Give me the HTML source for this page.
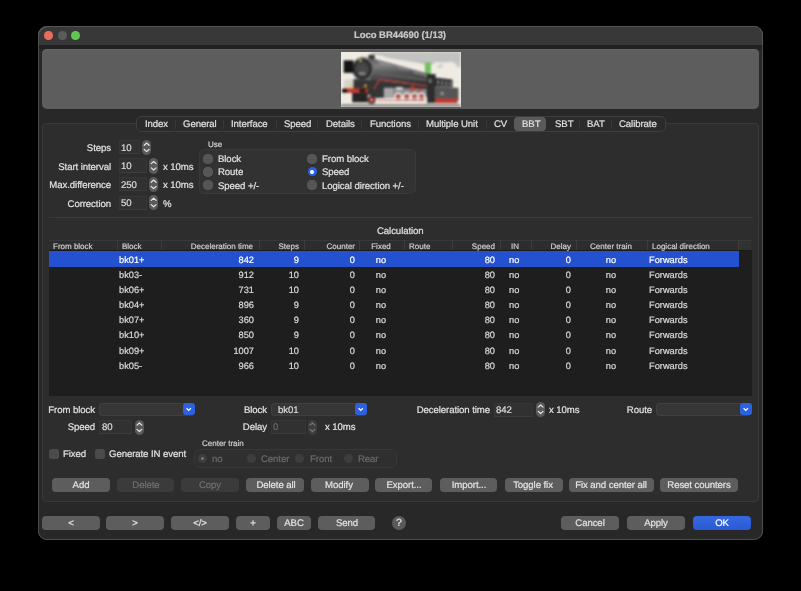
<!DOCTYPE html>
<html><head><meta charset="utf-8"><title>Loco BR44690</title>
<style>
*{box-sizing:border-box;margin:0;padding:0}
html,body{width:801px;height:591px;background:#000;overflow:hidden}
body{position:relative;font-family:"Liberation Sans",sans-serif;font-size:9.6px;color:#dcdcdc}
.a{position:absolute}
.t{position:absolute;line-height:1;white-space:nowrap;-webkit-text-stroke:0.2px currentColor;text-rendering:geometricPrecision}
body>div{will-change:transform}
</style></head><body>
<div class="a" style="left:38.00px;top:26.00px;width:725.00px;height:514.00px;border-radius:9px;background:#282828;box-shadow:0 0 0 1px #4d4d4d inset;"></div>
<div class="a" style="left:38.00px;top:26.00px;width:725.00px;height:19.00px;border-radius:9px 9px 0 0;background:#383838;box-shadow:inset 1px 1px 0 #555, inset -1px 0 0 #555;"></div>
<div class="a" style="left:39.00px;top:45.00px;width:723.00px;height:4.00px;background:#212121;"></div>
<div class="a" style="left:43.70px;top:31.40px;width:8.60px;height:8.60px;border-radius:50%;background:#ed6a5e;"></div>
<div class="a" style="left:57.50px;top:31.40px;width:8.60px;height:8.60px;border-radius:50%;background:#5b5b5b;"></div>
<div class="a" style="left:71.20px;top:31.40px;width:8.60px;height:8.60px;border-radius:50%;background:#62c554;"></div>
<div class="t " style="left:353.50px;top:31.00px;font-size:9.5px;letter-spacing:-0.05px;color:#c9c9c9;font-weight:700;">Loco BR44690 (1/13)</div>
<div class="a" style="left:42.00px;top:48.80px;width:717.00px;height:60.40px;background:#5d5d5d;border-radius:5px;box-shadow:inset 0 1px 0 #666;"></div>
<div class="a" style="left:341px;top:51.5px;width:119.5px;height:55px;overflow:hidden;background:#efebe3"><div style="filter:blur(0.8px)"><svg width="119.5" height="55" viewBox="0 0 120 55" style="display:block">
<defs><filter id="bl" x="-5%" y="-5%" width="110%" height="110%"><feGaussianBlur stdDeviation="0.7"/></filter>
<linearGradient id="boil" x1="0" y1="0" x2="0.15" y2="1"><stop offset="0" stop-color="#5a5a5a"/><stop offset="0.3" stop-color="#808080"/><stop offset="0.6" stop-color="#555"/><stop offset="1" stop-color="#333"/></linearGradient>
</defs>
<rect width="120" height="55" fill="#efebe3"/>
<g>
<path d="M30 0 L120 0 L120 15.5 L117 14.5 L114 11 L111 10 L100 10.5 L95 10 L91 13 L84 12.5 L78 11 L72 10 L60 8 L48 6 L38 3 L30 2 Z" fill="#c2c2c0"/>
<path d="M96.5 13.5 L102 12.5 L103 14.5 L98 16.5 Z" fill="#cdcdcb"/>
<path d="M115 12 L118 11 L118 15 L116 15.5 Z" fill="#d0d0ce"/>
<rect x="87.5" y="0" width="4" height="2" fill="#b6d3a8"/>
<rect x="84.3" y="10.5" width="6" height="13" fill="#72bf5e"/>
<rect x="84.3" y="52" width="6" height="3" fill="#86c274"/>
<path d="M3 28 L12 27 L12 40 L3 40 Z" fill="#d6d4ce"/>
<path d="M27.6 2.8 L33.9 2.8 L33.9 7.5 L27.6 7.5 Z" fill="#333"/>
<path d="M22 6 L33 6.7 L48.7 10.6 L70.5 16.9 L89.3 22.3 L90 34 L60 31 L33 28.5 L22 26 Z" fill="url(#boil)"/>
<path d="M36 8.5 L48 11 L52 14 L40 13 Z" fill="#8c8c8c"/>
<path d="M54 12.5 L66 15.5 L70 19 L58 17 Z" fill="#858585"/>
<path d="M70 17.5 L86 22 L87 25 L74 22 Z" fill="#777"/>
<path d="M36 20 L86 27 L86 29 L36 23 Z" fill="#5c5c5c"/>
<ellipse cx="22" cy="16.8" rx="11" ry="12" fill="#6a6a6a"/>
<ellipse cx="21.6" cy="17" rx="9.3" ry="10.2" fill="#222"/>
<ellipse cx="21.4" cy="17.2" rx="7.4" ry="8.2" fill="#444"/>
<ellipse cx="21.6" cy="18.3" rx="3.6" ry="4" fill="#4a4a4a"/>
<rect x="18" y="20.5" width="6.5" height="2" fill="#999"/>
<circle cx="19.5" cy="8.5" r="1.3" fill="#e2c640"/>
<rect x="2.7" y="8.3" width="9.8" height="12.5" fill="#131313"/>
<path d="M12.5 27 L33 28 L60 31 L89 34 L89 45 L60 46 L35 46 L26 42 L12.5 38 Z" fill="#353535"/>
<rect x="43" y="35.8" width="9.8" height="9.9" fill="#a8a8a8"/>
<path d="M52 36 L86 37 L86 45 L52 45 Z" fill="#8a8a8a"/>
<path d="M55 35 L62 35 L62 38 L55 38 Z" fill="#d0d0d0"/>
<path d="M33 37.3 L38.6 27.6 L59 30.2 L89 34.3" stroke="#cc4036" stroke-width="1.15" fill="none"/>
<rect x="70" y="34.5" width="4" height="4" fill="#c53a2e"/>
<rect x="78" y="36" width="2.5" height="3.5" fill="#c53a2e"/>
<rect x="1.9" y="36.4" width="24.9" height="4.6" fill="#c3392d"/>
<rect x="1" y="37" width="5" height="3.5" fill="#161616"/>
<rect x="18.5" y="37" width="6" height="3.5" fill="#1c1c1c"/>
<rect x="11.2" y="41" width="15.6" height="9.4" fill="#242424"/>
<circle cx="10.4" cy="33.9" r="1.3" fill="#e2c640"/>
<circle cx="24.6" cy="33.9" r="1.3" fill="#e2c640"/>
<circle cx="30.7" cy="48" r="3.9" fill="#2a2a2a"/>
<circle cx="30.7" cy="48" r="2.6" fill="#c3392d"/>
<circle cx="30.7" cy="48" r="0.9" fill="#eee"/>
<g fill="#e4e4e4"><circle cx="57.5" cy="45" r="4.6"/><circle cx="66" cy="45" r="4.6"/><circle cx="73.8" cy="45" r="4.6"/><circle cx="80.8" cy="45" r="4.6"/></g>
<g fill="#c53a2e"><circle cx="57.5" cy="45" r="2.6"/><circle cx="66" cy="45" r="2.6"/><circle cx="73.8" cy="45" r="2.6"/><circle cx="80.8" cy="45" r="2.6"/></g>
<g fill="#3a3a3a"><circle cx="57.5" cy="45" r="1.1"/><circle cx="66" cy="45" r="1.1"/><circle cx="73.8" cy="45" r="1.1"/><circle cx="80.8" cy="45" r="1.1"/></g>
<path d="M38 46.5 L84 45.5" stroke="#ececec" stroke-width="1"/>
<path d="M36 48.5 L84 48.5" stroke="#c94036" stroke-width="0.7"/>
<rect x="86.5" y="22" width="8.5" height="29" fill="#2c2c2c"/>
<rect x="88" y="27" width="3" height="4" fill="#777"/>
<path d="M94 25.4 L112 27.5 L112 35 L94 34 Z" fill="#2e2e2e"/>
<g fill="#a0a0a0"><rect x="97" y="28" width="1.3" height="4.5"/><rect x="101" y="28.5" width="1.3" height="4.5"/><rect x="105" y="29" width="1.3" height="4.5"/><rect x="109" y="29.3" width="1.3" height="4.5"/></g>
<path d="M94 34 L118 36 L118 48.8 L94 47.8 Z" fill="#555"/>
<rect x="100" y="40" width="3" height="3" fill="#9a9a9a"/>
<rect x="94.5" y="46.6" width="22.5" height="4.6" fill="#c3392d"/>
<rect x="0" y="52.3" width="120" height="2.7" fill="#8c8c8c"/>
</g>
</svg>
</div></div>
<div class="a" style="left:42.00px;top:123.00px;width:717.00px;height:379.30px;background:#2d2d2d;border:1px solid #3a3a3a;border-radius:4px;"></div>
<div class="a" style="left:135.50px;top:115.50px;width:530.00px;height:15.50px;background:#2b2b2b;border:1px solid #3e3e3e;border-radius:5px;"></div>
<div class="a" style="left:514.00px;top:116.50px;width:31.70px;height:13.50px;background:#5a5a5a;border-radius:4px;"></div>
<div class="t " style="left:145.00px;top:120.00px;font-size:9.6px;letter-spacing:-0.08px;color:#e0e0e0;">Index</div>
<div class="t " style="left:183.00px;top:120.00px;font-size:9.6px;letter-spacing:-0.08px;color:#e0e0e0;">General</div>
<div class="t " style="left:230.75px;top:120.00px;font-size:9.6px;letter-spacing:-0.08px;color:#e0e0e0;">Interface</div>
<div class="t " style="left:283.75px;top:120.00px;font-size:9.6px;letter-spacing:-0.08px;color:#e0e0e0;">Speed</div>
<div class="t " style="left:325.70px;top:120.00px;font-size:9.6px;letter-spacing:-0.08px;color:#e0e0e0;">Details</div>
<div class="t " style="left:369.50px;top:120.00px;font-size:9.6px;letter-spacing:-0.08px;color:#e0e0e0;">Functions</div>
<div class="t " style="left:426.20px;top:120.00px;font-size:9.6px;letter-spacing:-0.08px;color:#e0e0e0;">Multiple Unit</div>
<div class="t " style="left:494.00px;top:120.00px;font-size:9.6px;letter-spacing:-0.08px;color:#e0e0e0;">CV</div>
<div class="t " style="left:521.50px;top:120.00px;font-size:9.6px;letter-spacing:-0.08px;color:#e0e0e0;">BBT</div>
<div class="t " style="left:554.70px;top:120.00px;font-size:9.6px;letter-spacing:-0.08px;color:#e0e0e0;">SBT</div>
<div class="t " style="left:586.60px;top:120.00px;font-size:9.6px;letter-spacing:-0.08px;color:#e0e0e0;">BAT</div>
<div class="t " style="left:619.20px;top:120.00px;font-size:9.6px;letter-spacing:-0.08px;color:#e0e0e0;">Calibrate</div>
<div class="a" style="left:175.00px;top:119.50px;width:1.00px;height:9.00px;background:#383838;"></div>
<div class="a" style="left:223.00px;top:119.50px;width:1.00px;height:9.00px;background:#383838;"></div>
<div class="a" style="left:276.00px;top:119.50px;width:1.00px;height:9.00px;background:#383838;"></div>
<div class="a" style="left:317.00px;top:119.50px;width:1.00px;height:9.00px;background:#383838;"></div>
<div class="a" style="left:361.20px;top:119.50px;width:1.00px;height:9.00px;background:#383838;"></div>
<div class="a" style="left:417.50px;top:119.50px;width:1.00px;height:9.00px;background:#383838;"></div>
<div class="a" style="left:486.20px;top:119.50px;width:1.00px;height:9.00px;background:#383838;"></div>
<div class="a" style="left:578.80px;top:119.50px;width:1.00px;height:9.00px;background:#383838;"></div>
<div class="a" style="left:611.30px;top:119.50px;width:1.00px;height:9.00px;background:#383838;"></div>
<div class="t" style="left:-89.00px;width:200px;text-align:right;top:144.00px;font-size:9.6px;letter-spacing:-0.08px;color:#e2e2e2;">Steps</div>
<div class="a" style="left:118.70px;top:140.00px;width:21.30px;height:13.70px;background:#313131;border:1px solid #363636;border-bottom-color:#3c3c3c;"></div>
<div class="t " style="left:121.00px;top:144.00px;font-size:9.6px;letter-spacing:-0.08px;color:#dcdcdc;">10</div>
<div class="a" style="left:142.20px;top:139.50px;width:9.30px;height:14.70px;background:#5a5a5a;border-radius:4.5px;"><svg width="9.30" height="14.70" viewBox="0 0 9.30 14.70" style="position:absolute;left:0;top:0"><path d="M2.25 5.25 L4.65 3.05 L7.05 5.25 M2.25 9.45 L4.65 11.65 L7.05 9.45" stroke="#e6e6e6" stroke-width="1.2" fill="none" stroke-linecap="round" stroke-linejoin="round"/></svg></div>
<div class="t" style="left:-89.00px;width:200px;text-align:right;top:163.00px;font-size:9.6px;letter-spacing:-0.08px;color:#e2e2e2;">Start interval</div>
<div class="a" style="left:118.70px;top:158.00px;width:28.00px;height:14.50px;background:#313131;border:1px solid #363636;border-bottom-color:#3c3c3c;"></div>
<div class="t " style="left:121.00px;top:162.00px;font-size:9.6px;letter-spacing:-0.08px;color:#dcdcdc;">10</div>
<div class="a" style="left:148.90px;top:157.50px;width:9.30px;height:15.50px;background:#5a5a5a;border-radius:4.5px;"><svg width="9.30" height="15.50" viewBox="0 0 9.30 15.50" style="position:absolute;left:0;top:0"><path d="M2.25 5.65 L4.65 3.45 L7.05 5.65 M2.25 9.85 L4.65 12.05 L7.05 9.85" stroke="#e6e6e6" stroke-width="1.2" fill="none" stroke-linecap="round" stroke-linejoin="round"/></svg></div>
<div class="t " style="left:163.00px;top:163.00px;font-size:9.6px;letter-spacing:-0.08px;color:#e2e2e2;">x 10ms</div>
<div class="t" style="left:-89.00px;width:200px;text-align:right;top:181.00px;font-size:9.6px;letter-spacing:-0.08px;color:#e2e2e2;">Max.difference</div>
<div class="a" style="left:118.70px;top:177.00px;width:28.00px;height:13.70px;background:#313131;border:1px solid #363636;border-bottom-color:#3c3c3c;"></div>
<div class="t " style="left:121.00px;top:181.00px;font-size:9.6px;letter-spacing:-0.08px;color:#dcdcdc;">250</div>
<div class="a" style="left:148.90px;top:176.50px;width:9.30px;height:14.70px;background:#5a5a5a;border-radius:4.5px;"><svg width="9.30" height="14.70" viewBox="0 0 9.30 14.70" style="position:absolute;left:0;top:0"><path d="M2.25 5.25 L4.65 3.05 L7.05 5.25 M2.25 9.45 L4.65 11.65 L7.05 9.45" stroke="#e6e6e6" stroke-width="1.2" fill="none" stroke-linecap="round" stroke-linejoin="round"/></svg></div>
<div class="t " style="left:163.00px;top:181.00px;font-size:9.6px;letter-spacing:-0.08px;color:#e2e2e2;">x 10ms</div>
<div class="t" style="left:-89.00px;width:200px;text-align:right;top:200.00px;font-size:9.6px;letter-spacing:-0.08px;color:#e2e2e2;">Correction</div>
<div class="a" style="left:118.70px;top:195.50px;width:28.00px;height:14.00px;background:#313131;border:1px solid #363636;border-bottom-color:#3c3c3c;"></div>
<div class="t " style="left:121.00px;top:199.00px;font-size:9.6px;letter-spacing:-0.08px;color:#dcdcdc;">50</div>
<div class="a" style="left:148.90px;top:195.00px;width:9.30px;height:15.00px;background:#5a5a5a;border-radius:4.5px;"><svg width="9.30" height="15.00" viewBox="0 0 9.30 15.00" style="position:absolute;left:0;top:0"><path d="M2.25 5.40 L4.65 3.20 L7.05 5.40 M2.25 9.60 L4.65 11.80 L7.05 9.60" stroke="#e6e6e6" stroke-width="1.2" fill="none" stroke-linecap="round" stroke-linejoin="round"/></svg></div>
<div class="t " style="left:163.00px;top:200.00px;font-size:9.6px;letter-spacing:-0.08px;color:#e2e2e2;">%</div>
<div class="t " style="left:207.50px;top:141.00px;font-size:8px;color:#d4d4d4;">Use</div>
<div class="a" style="left:199.30px;top:149.20px;width:217.30px;height:45.30px;border:1px solid #393939;border-radius:5px;background:#323232;"></div>
<div class="a" style="left:203.20px;top:153.60px;width:9.8px;height:9.8px;border-radius:50%;background:#565656;box-shadow:inset 0 0 0 0.6px #5a5a5a;"></div>
<div class="t " style="left:217.50px;top:155.00px;font-size:9.6px;letter-spacing:-0.08px;color:#e2e2e2;">Block</div>
<div class="a" style="left:203.20px;top:166.60px;width:9.8px;height:9.8px;border-radius:50%;background:#565656;box-shadow:inset 0 0 0 0.6px #5a5a5a;"></div>
<div class="t " style="left:217.50px;top:168.00px;font-size:9.6px;letter-spacing:-0.08px;color:#e2e2e2;">Route</div>
<div class="a" style="left:203.20px;top:180.10px;width:9.8px;height:9.8px;border-radius:50%;background:#565656;box-shadow:inset 0 0 0 0.6px #5a5a5a;"></div>
<div class="t " style="left:217.50px;top:182.00px;font-size:9.6px;letter-spacing:-0.08px;color:#e2e2e2;">Speed +/-</div>
<div class="a" style="left:307.20px;top:153.60px;width:9.8px;height:9.8px;border-radius:50%;background:#565656;box-shadow:inset 0 0 0 0.6px #5a5a5a;"></div>
<div class="t " style="left:321.50px;top:155.00px;font-size:9.6px;letter-spacing:-0.08px;color:#e2e2e2;">From block</div>
<div class="a" style="left:307.50px;top:166.90px;width:9.2px;height:9.2px;border-radius:50%;background:#2b62e1;"></div>
<div class="a" style="left:310.20px;top:169.60px;width:3.8px;height:3.8px;border-radius:50%;background:#fff;"></div>
<div class="t " style="left:321.50px;top:168.00px;font-size:9.6px;letter-spacing:-0.08px;color:#e2e2e2;">Speed</div>
<div class="a" style="left:307.20px;top:180.10px;width:9.8px;height:9.8px;border-radius:50%;background:#565656;box-shadow:inset 0 0 0 0.6px #5a5a5a;"></div>
<div class="t " style="left:321.50px;top:182.00px;font-size:9.6px;letter-spacing:-0.08px;color:#e2e2e2;">Logical direction +/-</div>
<div class="a" style="left:49.00px;top:217.00px;width:703.50px;height:1.00px;background:#3a3a3a;"></div>
<div class="t " style="left:377.20px;top:227.00px;font-size:9.6px;letter-spacing:-0.08px;color:#e2e2e2;">Calculation</div>
<div class="a" style="left:48.80px;top:240.00px;width:702.60px;height:156.00px;background:#1e1e1e;"></div>
<div class="a" style="left:48.80px;top:240.00px;width:702.60px;height:11.00px;background:#2d2d2d;border-top:1px solid #383838;border-bottom:1px solid #1b1b1b;"></div>
<div class="a" style="left:738.00px;top:240.00px;width:13.40px;height:10.00px;background:#323232;border-top:1px solid #3a3a3a;"></div>
<div class="a" style="left:117.40px;top:240.00px;width:1.00px;height:10.00px;background:#3c3c3c;"></div>
<div class="a" style="left:161.40px;top:240.00px;width:1.00px;height:10.00px;background:#3c3c3c;"></div>
<div class="a" style="left:258.50px;top:240.00px;width:1.00px;height:10.00px;background:#3c3c3c;"></div>
<div class="a" style="left:304.00px;top:240.00px;width:1.00px;height:10.00px;background:#3c3c3c;"></div>
<div class="a" style="left:359.40px;top:240.00px;width:1.00px;height:10.00px;background:#3c3c3c;"></div>
<div class="a" style="left:404.00px;top:240.00px;width:1.00px;height:10.00px;background:#3c3c3c;"></div>
<div class="a" style="left:451.50px;top:240.00px;width:1.00px;height:10.00px;background:#3c3c3c;"></div>
<div class="a" style="left:500.30px;top:240.00px;width:1.00px;height:10.00px;background:#3c3c3c;"></div>
<div class="a" style="left:531.20px;top:240.00px;width:1.00px;height:10.00px;background:#3c3c3c;"></div>
<div class="a" style="left:576.20px;top:240.00px;width:1.00px;height:10.00px;background:#3c3c3c;"></div>
<div class="a" style="left:647.00px;top:240.00px;width:1.00px;height:10.00px;background:#3c3c3c;"></div>
<div class="a" style="left:738.00px;top:240.00px;width:1.00px;height:10.00px;background:#3c3c3c;"></div>
<div class="t " style="left:52.90px;top:243.00px;font-size:8px;color:#cfcfcf;">From block</div>
<div class="t " style="left:121.90px;top:243.00px;font-size:8px;color:#cfcfcf;">Block</div>
<div class="t" style="left:53.30px;width:200px;text-align:right;top:243.00px;font-size:8px;color:#cfcfcf;">Deceleration time</div>
<div class="t" style="left:99.20px;width:200px;text-align:right;top:243.00px;font-size:8px;color:#cfcfcf;">Steps</div>
<div class="t" style="left:154.90px;width:200px;text-align:right;top:243.00px;font-size:8px;color:#cfcfcf;">Counter</div>
<div class="t" style="left:280.50px;width:200px;text-align:center;top:243.00px;font-size:8px;color:#cfcfcf;">Fixed</div>
<div class="t " style="left:409.00px;top:243.00px;font-size:8px;color:#cfcfcf;">Route</div>
<div class="t" style="left:295.20px;width:200px;text-align:right;top:243.00px;font-size:8px;color:#cfcfcf;">Speed</div>
<div class="t" style="left:415.00px;width:200px;text-align:center;top:243.00px;font-size:8px;color:#cfcfcf;">IN</div>
<div class="t" style="left:371.20px;width:200px;text-align:right;top:243.00px;font-size:8px;color:#cfcfcf;">Delay</div>
<div class="t" style="left:511.20px;width:200px;text-align:center;top:243.00px;font-size:8px;color:#cfcfcf;">Center train</div>
<div class="t " style="left:651.90px;top:243.00px;font-size:8px;color:#cfcfcf;">Logical direction</div>
<div class="a" style="left:48.80px;top:251.00px;width:689.80px;height:15.80px;background:#2451cf;"></div>
<div class="t " style="left:118.90px;top:256.00px;font-size:9.25px;color:#ffffff;">bk01+</div>
<div class="t" style="left:53.60px;width:200px;text-align:right;top:256.00px;font-size:9.25px;color:#ffffff;">842</div>
<div class="t" style="left:99.20px;width:200px;text-align:right;top:256.00px;font-size:9.25px;color:#ffffff;">9</div>
<div class="t" style="left:155.00px;width:200px;text-align:right;top:256.00px;font-size:9.25px;color:#ffffff;">0</div>
<div class="t" style="left:280.50px;width:200px;text-align:center;top:256.00px;font-size:9.25px;color:#ffffff;">no</div>
<div class="t" style="left:295.30px;width:200px;text-align:right;top:256.00px;font-size:9.25px;color:#ffffff;">80</div>
<div class="t " style="left:508.50px;top:256.00px;font-size:9.25px;color:#ffffff;">no</div>
<div class="t" style="left:371.40px;width:200px;text-align:right;top:256.00px;font-size:9.25px;color:#ffffff;">0</div>
<div class="t" style="left:510.50px;width:200px;text-align:center;top:256.00px;font-size:9.25px;color:#ffffff;">no</div>
<div class="t " style="left:649.20px;top:256.00px;font-size:9.25px;color:#ffffff;">Forwards</div>
<div class="t " style="left:118.90px;top:271.00px;font-size:9.25px;color:#dcdcdc;">bk03-</div>
<div class="t" style="left:53.60px;width:200px;text-align:right;top:271.00px;font-size:9.25px;color:#dcdcdc;">912</div>
<div class="t" style="left:99.20px;width:200px;text-align:right;top:271.00px;font-size:9.25px;color:#dcdcdc;">10</div>
<div class="t" style="left:155.00px;width:200px;text-align:right;top:271.00px;font-size:9.25px;color:#dcdcdc;">0</div>
<div class="t" style="left:280.50px;width:200px;text-align:center;top:271.00px;font-size:9.25px;color:#dcdcdc;">no</div>
<div class="t" style="left:295.30px;width:200px;text-align:right;top:271.00px;font-size:9.25px;color:#dcdcdc;">80</div>
<div class="t " style="left:508.50px;top:271.00px;font-size:9.25px;color:#dcdcdc;">no</div>
<div class="t" style="left:371.40px;width:200px;text-align:right;top:271.00px;font-size:9.25px;color:#dcdcdc;">0</div>
<div class="t" style="left:510.50px;width:200px;text-align:center;top:271.00px;font-size:9.25px;color:#dcdcdc;">no</div>
<div class="t " style="left:649.20px;top:271.00px;font-size:9.25px;color:#dcdcdc;">Forwards</div>
<div class="t " style="left:118.90px;top:286.00px;font-size:9.25px;color:#dcdcdc;">bk06+</div>
<div class="t" style="left:53.60px;width:200px;text-align:right;top:286.00px;font-size:9.25px;color:#dcdcdc;">731</div>
<div class="t" style="left:99.20px;width:200px;text-align:right;top:286.00px;font-size:9.25px;color:#dcdcdc;">10</div>
<div class="t" style="left:155.00px;width:200px;text-align:right;top:286.00px;font-size:9.25px;color:#dcdcdc;">0</div>
<div class="t" style="left:280.50px;width:200px;text-align:center;top:286.00px;font-size:9.25px;color:#dcdcdc;">no</div>
<div class="t" style="left:295.30px;width:200px;text-align:right;top:286.00px;font-size:9.25px;color:#dcdcdc;">80</div>
<div class="t " style="left:508.50px;top:286.00px;font-size:9.25px;color:#dcdcdc;">no</div>
<div class="t" style="left:371.40px;width:200px;text-align:right;top:286.00px;font-size:9.25px;color:#dcdcdc;">0</div>
<div class="t" style="left:510.50px;width:200px;text-align:center;top:286.00px;font-size:9.25px;color:#dcdcdc;">no</div>
<div class="t " style="left:649.20px;top:286.00px;font-size:9.25px;color:#dcdcdc;">Forwards</div>
<div class="t " style="left:118.90px;top:301.00px;font-size:9.25px;color:#dcdcdc;">bk04+</div>
<div class="t" style="left:53.60px;width:200px;text-align:right;top:301.00px;font-size:9.25px;color:#dcdcdc;">896</div>
<div class="t" style="left:99.20px;width:200px;text-align:right;top:301.00px;font-size:9.25px;color:#dcdcdc;">9</div>
<div class="t" style="left:155.00px;width:200px;text-align:right;top:301.00px;font-size:9.25px;color:#dcdcdc;">0</div>
<div class="t" style="left:280.50px;width:200px;text-align:center;top:301.00px;font-size:9.25px;color:#dcdcdc;">no</div>
<div class="t" style="left:295.30px;width:200px;text-align:right;top:301.00px;font-size:9.25px;color:#dcdcdc;">80</div>
<div class="t " style="left:508.50px;top:301.00px;font-size:9.25px;color:#dcdcdc;">no</div>
<div class="t" style="left:371.40px;width:200px;text-align:right;top:301.00px;font-size:9.25px;color:#dcdcdc;">0</div>
<div class="t" style="left:510.50px;width:200px;text-align:center;top:301.00px;font-size:9.25px;color:#dcdcdc;">no</div>
<div class="t " style="left:649.20px;top:301.00px;font-size:9.25px;color:#dcdcdc;">Forwards</div>
<div class="t " style="left:118.90px;top:316.00px;font-size:9.25px;color:#dcdcdc;">bk07+</div>
<div class="t" style="left:53.60px;width:200px;text-align:right;top:316.00px;font-size:9.25px;color:#dcdcdc;">360</div>
<div class="t" style="left:99.20px;width:200px;text-align:right;top:316.00px;font-size:9.25px;color:#dcdcdc;">9</div>
<div class="t" style="left:155.00px;width:200px;text-align:right;top:316.00px;font-size:9.25px;color:#dcdcdc;">0</div>
<div class="t" style="left:280.50px;width:200px;text-align:center;top:316.00px;font-size:9.25px;color:#dcdcdc;">no</div>
<div class="t" style="left:295.30px;width:200px;text-align:right;top:316.00px;font-size:9.25px;color:#dcdcdc;">80</div>
<div class="t " style="left:508.50px;top:316.00px;font-size:9.25px;color:#dcdcdc;">no</div>
<div class="t" style="left:371.40px;width:200px;text-align:right;top:316.00px;font-size:9.25px;color:#dcdcdc;">0</div>
<div class="t" style="left:510.50px;width:200px;text-align:center;top:316.00px;font-size:9.25px;color:#dcdcdc;">no</div>
<div class="t " style="left:649.20px;top:316.00px;font-size:9.25px;color:#dcdcdc;">Forwards</div>
<div class="t " style="left:118.90px;top:331.00px;font-size:9.25px;color:#dcdcdc;">bk10+</div>
<div class="t" style="left:53.60px;width:200px;text-align:right;top:331.00px;font-size:9.25px;color:#dcdcdc;">850</div>
<div class="t" style="left:99.20px;width:200px;text-align:right;top:331.00px;font-size:9.25px;color:#dcdcdc;">9</div>
<div class="t" style="left:155.00px;width:200px;text-align:right;top:331.00px;font-size:9.25px;color:#dcdcdc;">0</div>
<div class="t" style="left:280.50px;width:200px;text-align:center;top:331.00px;font-size:9.25px;color:#dcdcdc;">no</div>
<div class="t" style="left:295.30px;width:200px;text-align:right;top:331.00px;font-size:9.25px;color:#dcdcdc;">80</div>
<div class="t " style="left:508.50px;top:331.00px;font-size:9.25px;color:#dcdcdc;">no</div>
<div class="t" style="left:371.40px;width:200px;text-align:right;top:331.00px;font-size:9.25px;color:#dcdcdc;">0</div>
<div class="t" style="left:510.50px;width:200px;text-align:center;top:331.00px;font-size:9.25px;color:#dcdcdc;">no</div>
<div class="t " style="left:649.20px;top:331.00px;font-size:9.25px;color:#dcdcdc;">Forwards</div>
<div class="t " style="left:118.90px;top:347.00px;font-size:9.25px;color:#dcdcdc;">bk09+</div>
<div class="t" style="left:53.60px;width:200px;text-align:right;top:347.00px;font-size:9.25px;color:#dcdcdc;">1007</div>
<div class="t" style="left:99.20px;width:200px;text-align:right;top:347.00px;font-size:9.25px;color:#dcdcdc;">10</div>
<div class="t" style="left:155.00px;width:200px;text-align:right;top:347.00px;font-size:9.25px;color:#dcdcdc;">0</div>
<div class="t" style="left:280.50px;width:200px;text-align:center;top:347.00px;font-size:9.25px;color:#dcdcdc;">no</div>
<div class="t" style="left:295.30px;width:200px;text-align:right;top:347.00px;font-size:9.25px;color:#dcdcdc;">80</div>
<div class="t " style="left:508.50px;top:347.00px;font-size:9.25px;color:#dcdcdc;">no</div>
<div class="t" style="left:371.40px;width:200px;text-align:right;top:347.00px;font-size:9.25px;color:#dcdcdc;">0</div>
<div class="t" style="left:510.50px;width:200px;text-align:center;top:347.00px;font-size:9.25px;color:#dcdcdc;">no</div>
<div class="t " style="left:649.20px;top:347.00px;font-size:9.25px;color:#dcdcdc;">Forwards</div>
<div class="t " style="left:118.90px;top:362.00px;font-size:9.25px;color:#dcdcdc;">bk05-</div>
<div class="t" style="left:53.60px;width:200px;text-align:right;top:362.00px;font-size:9.25px;color:#dcdcdc;">966</div>
<div class="t" style="left:99.20px;width:200px;text-align:right;top:362.00px;font-size:9.25px;color:#dcdcdc;">10</div>
<div class="t" style="left:155.00px;width:200px;text-align:right;top:362.00px;font-size:9.25px;color:#dcdcdc;">0</div>
<div class="t" style="left:280.50px;width:200px;text-align:center;top:362.00px;font-size:9.25px;color:#dcdcdc;">no</div>
<div class="t" style="left:295.30px;width:200px;text-align:right;top:362.00px;font-size:9.25px;color:#dcdcdc;">80</div>
<div class="t " style="left:508.50px;top:362.00px;font-size:9.25px;color:#dcdcdc;">no</div>
<div class="t" style="left:371.40px;width:200px;text-align:right;top:362.00px;font-size:9.25px;color:#dcdcdc;">0</div>
<div class="t" style="left:510.50px;width:200px;text-align:center;top:362.00px;font-size:9.25px;color:#dcdcdc;">no</div>
<div class="t " style="left:649.20px;top:362.00px;font-size:9.25px;color:#dcdcdc;">Forwards</div>
<div class="t" style="left:-105.00px;width:200px;text-align:right;top:406.00px;font-size:9.6px;letter-spacing:-0.08px;color:#e2e2e2;">From block</div>
<div class="a" style="left:99.20px;top:402.50px;width:95.30px;height:13.00px;background:#363636;border-radius:4px;box-shadow:inset 0 0 0 1px #404040;"></div>
<div class="a" style="left:183.00px;top:403.00px;width:11.5px;height:12.00px;background:#2c62e0;border-radius:3px;"><svg width="11.5" height="12.00" style="position:absolute;left:0;top:0"><path d="M3.6 5.3 L5.75 7.4 L7.9 5.3" stroke="#fff" stroke-width="1.3" fill="none"/></svg></div>
<div class="t" style="left:67.00px;width:200px;text-align:right;top:406.00px;font-size:9.6px;letter-spacing:-0.08px;color:#e2e2e2;">Block</div>
<div class="a" style="left:270.50px;top:402.50px;width:96.20px;height:13.00px;background:#363636;border-radius:4px;box-shadow:inset 0 0 0 1px #404040;"></div>
<div class="a" style="left:355.20px;top:403.00px;width:11.5px;height:12.00px;background:#2c62e0;border-radius:3px;"><svg width="11.5" height="12.00" style="position:absolute;left:0;top:0"><path d="M3.6 5.3 L5.75 7.4 L7.9 5.3" stroke="#fff" stroke-width="1.3" fill="none"/></svg></div>
<div class="t " style="left:278.00px;top:406.00px;font-size:9.6px;letter-spacing:-0.08px;color:#dcdcdc;">bk01</div>
<div class="t" style="left:289.50px;width:200px;text-align:right;top:406.00px;font-size:9.6px;letter-spacing:-0.08px;color:#e2e2e2;">Deceleration time</div>
<div class="a" style="left:494.00px;top:402.50px;width:39.00px;height:13.50px;background:#313131;border:1px solid #363636;border-bottom-color:#3c3c3c;"></div>
<div class="t " style="left:496.30px;top:406.00px;font-size:9.6px;letter-spacing:-0.08px;color:#dcdcdc;">842</div>
<div class="a" style="left:535.70px;top:402.00px;width:9.30px;height:14.50px;background:#5a5a5a;border-radius:4.5px;"><svg width="9.30" height="14.50" viewBox="0 0 9.30 14.50" style="position:absolute;left:0;top:0"><path d="M2.25 5.15 L4.65 2.95 L7.05 5.15 M2.25 9.35 L4.65 11.55 L7.05 9.35" stroke="#e6e6e6" stroke-width="1.2" fill="none" stroke-linecap="round" stroke-linejoin="round"/></svg></div>
<div class="t " style="left:548.70px;top:406.00px;font-size:9.6px;letter-spacing:-0.08px;color:#e2e2e2;">x 10ms</div>
<div class="t" style="left:452.00px;width:200px;text-align:right;top:406.00px;font-size:9.6px;letter-spacing:-0.08px;color:#e2e2e2;">Route</div>
<div class="a" style="left:656.40px;top:402.50px;width:95.00px;height:13.10px;background:#363636;border-radius:4px;box-shadow:inset 0 0 0 1px #404040;"></div>
<div class="a" style="left:739.90px;top:403.00px;width:11.5px;height:12.10px;background:#2c62e0;border-radius:3px;"><svg width="11.5" height="12.10" style="position:absolute;left:0;top:0"><path d="M3.6 5.3 L5.75 7.4 L7.9 5.3" stroke="#fff" stroke-width="1.3" fill="none"/></svg></div>
<div class="t" style="left:-105.00px;width:200px;text-align:right;top:423.00px;font-size:9.6px;letter-spacing:-0.08px;color:#e2e2e2;">Speed</div>
<div class="a" style="left:99.20px;top:420.00px;width:32.80px;height:13.50px;background:#313131;border:1px solid #363636;border-bottom-color:#3c3c3c;"></div>
<div class="t " style="left:101.50px;top:423.00px;font-size:9.6px;letter-spacing:-0.08px;color:#dcdcdc;">80</div>
<div class="a" style="left:134.50px;top:419.50px;width:8.80px;height:14.50px;background:#5a5a5a;border-radius:4.5px;"><svg width="8.80" height="14.50" viewBox="0 0 8.80 14.50" style="position:absolute;left:0;top:0"><path d="M2.00 5.15 L4.40 2.95 L6.80 5.15 M2.00 9.35 L4.40 11.55 L6.80 9.35" stroke="#e6e6e6" stroke-width="1.2" fill="none" stroke-linecap="round" stroke-linejoin="round"/></svg></div>
<div class="t" style="left:67.00px;width:200px;text-align:right;top:423.00px;font-size:9.6px;letter-spacing:-0.08px;color:#e2e2e2;">Delay</div>
<div class="a" style="left:270.50px;top:420.00px;width:34.50px;height:13.50px;background:#313131;border:1px solid #363636;border-bottom-color:#3c3c3c;"></div>
<div class="t " style="left:272.80px;top:423.00px;font-size:9.6px;letter-spacing:-0.08px;color:#6a6a6a;">0</div>
<div class="a" style="left:307.50px;top:419.50px;width:8.80px;height:14.50px;background:#3e3e3e;border-radius:4.5px;"><svg width="8.80" height="14.50" viewBox="0 0 8.80 14.50" style="position:absolute;left:0;top:0"><path d="M2.00 5.15 L4.40 2.95 L6.80 5.15 M2.00 9.35 L4.40 11.55 L6.80 9.35" stroke="#777" stroke-width="1.2" fill="none" stroke-linecap="round" stroke-linejoin="round"/></svg></div>
<div class="t " style="left:324.50px;top:423.00px;font-size:9.6px;letter-spacing:-0.08px;color:#e2e2e2;">x 10ms</div>
<div class="a" style="left:48.70px;top:448.70px;width:9.50px;height:9.50px;background:#4b4b4b;border-radius:2.5px;"></div>
<div class="t " style="left:63.00px;top:450.00px;font-size:9.6px;letter-spacing:-0.08px;color:#e2e2e2;">Fixed</div>
<div class="a" style="left:95.00px;top:448.70px;width:9.50px;height:9.50px;background:#4b4b4b;border-radius:2.5px;"></div>
<div class="t " style="left:108.70px;top:450.00px;font-size:9.6px;letter-spacing:-0.08px;color:#e2e2e2;">Generate IN event</div>
<div class="t " style="left:202.40px;top:440.00px;font-size:8px;color:#d0d0d0;">Center train</div>
<div class="a" style="left:194.00px;top:448.70px;width:202.60px;height:18.70px;border:1px solid #383838;border-radius:5px;background:#2f2f2f;"></div>
<div class="a" style="left:197.80px;top:454.00px;width:9.2px;height:9.2px;border-radius:50%;background:#3d3d3d;"></div>
<div class="t " style="left:212.00px;top:455.00px;font-size:9.6px;letter-spacing:-0.08px;color:#6b6b6b;">no</div>
<div class="a" style="left:246.70px;top:454.00px;width:9.2px;height:9.2px;border-radius:50%;background:#3d3d3d;"></div>
<div class="t " style="left:260.90px;top:455.00px;font-size:9.6px;letter-spacing:-0.08px;color:#6b6b6b;">Center</div>
<div class="a" style="left:295.40px;top:454.00px;width:9.2px;height:9.2px;border-radius:50%;background:#3d3d3d;"></div>
<div class="t " style="left:309.50px;top:455.00px;font-size:9.6px;letter-spacing:-0.08px;color:#6b6b6b;">Front</div>
<div class="a" style="left:344.20px;top:454.00px;width:9.2px;height:9.2px;border-radius:50%;background:#3d3d3d;"></div>
<div class="t " style="left:358.00px;top:455.00px;font-size:9.6px;letter-spacing:-0.08px;color:#6b6b6b;">Rear</div>
<div class="a" style="left:200.80px;top:457.00px;width:3.2px;height:3.2px;border-radius:50%;background:#777;"></div>
<div class="a" style="left:52.10px;top:478.00px;width:57.90px;height:14.00px;background:#5d5d5d;border-radius:4px;"></div>
<div class="t" style="left:-18.95px;width:200px;text-align:center;top:481.00px;font-size:9.6px;letter-spacing:-0.08px;color:#e3e3e3;">Add</div>
<div class="a" style="left:117.00px;top:478.00px;width:57.20px;height:14.00px;background:#3b3b3b;border-radius:4px;"></div>
<div class="t" style="left:45.60px;width:200px;text-align:center;top:481.00px;font-size:9.6px;letter-spacing:-0.08px;color:#707070;">Delete</div>
<div class="a" style="left:181.40px;top:478.00px;width:57.80px;height:14.00px;background:#3b3b3b;border-radius:4px;"></div>
<div class="t" style="left:110.30px;width:200px;text-align:center;top:481.00px;font-size:9.6px;letter-spacing:-0.08px;color:#707070;">Copy</div>
<div class="a" style="left:246.30px;top:478.00px;width:58.40px;height:14.00px;background:#5d5d5d;border-radius:4px;"></div>
<div class="t" style="left:175.50px;width:200px;text-align:center;top:481.00px;font-size:9.6px;letter-spacing:-0.08px;color:#e3e3e3;">Delete all</div>
<div class="a" style="left:310.70px;top:478.00px;width:57.50px;height:14.00px;background:#5d5d5d;border-radius:4px;"></div>
<div class="t" style="left:239.45px;width:200px;text-align:center;top:481.00px;font-size:9.6px;letter-spacing:-0.08px;color:#e3e3e3;">Modify</div>
<div class="a" style="left:375.30px;top:478.00px;width:57.20px;height:14.00px;background:#5d5d5d;border-radius:4px;"></div>
<div class="t" style="left:303.90px;width:200px;text-align:center;top:481.00px;font-size:9.6px;letter-spacing:-0.08px;color:#e3e3e3;">Export...</div>
<div class="a" style="left:440.30px;top:478.00px;width:56.70px;height:14.00px;background:#5d5d5d;border-radius:4px;"></div>
<div class="t" style="left:368.65px;width:200px;text-align:center;top:481.00px;font-size:9.6px;letter-spacing:-0.08px;color:#e3e3e3;">Import...</div>
<div class="a" style="left:504.50px;top:478.00px;width:57.50px;height:14.00px;background:#5d5d5d;border-radius:4px;"></div>
<div class="t" style="left:433.25px;width:200px;text-align:center;top:481.00px;font-size:9.6px;letter-spacing:-0.08px;color:#e3e3e3;">Toggle fix</div>
<div class="a" style="left:568.70px;top:478.00px;width:84.50px;height:14.00px;background:#5d5d5d;border-radius:4px;"></div>
<div class="t" style="left:510.95px;width:200px;text-align:center;top:481.00px;font-size:9.6px;letter-spacing:-0.08px;color:#e3e3e3;">Fix and center all</div>
<div class="a" style="left:660.00px;top:478.00px;width:77.50px;height:14.00px;background:#5d5d5d;border-radius:4px;"></div>
<div class="t" style="left:598.75px;width:200px;text-align:center;top:481.00px;font-size:9.6px;letter-spacing:-0.08px;color:#e3e3e3;">Reset counters</div>
<div class="a" style="left:42.00px;top:516.20px;width:57.70px;height:13.60px;background:#5d5d5d;border-radius:4px;"></div>
<div class="t" style="left:-29.15px;width:200px;text-align:center;top:519.00px;font-size:9.6px;letter-spacing:-0.08px;color:#e3e3e3;">&lt;</div>
<div class="a" style="left:106.30px;top:516.20px;width:57.90px;height:13.60px;background:#5d5d5d;border-radius:4px;"></div>
<div class="t" style="left:35.25px;width:200px;text-align:center;top:519.00px;font-size:9.6px;letter-spacing:-0.08px;color:#e3e3e3;">&gt;</div>
<div class="a" style="left:171.30px;top:516.20px;width:57.50px;height:13.60px;background:#5d5d5d;border-radius:4px;"></div>
<div class="t" style="left:100.05px;width:200px;text-align:center;top:519.00px;font-size:9.6px;letter-spacing:-0.08px;color:#e3e3e3;">&lt;/&gt;</div>
<div class="a" style="left:235.90px;top:516.20px;width:33.90px;height:13.60px;background:#5d5d5d;border-radius:4px;"></div>
<div class="t" style="left:152.85px;width:200px;text-align:center;top:519.00px;font-size:9.6px;letter-spacing:-0.08px;color:#e3e3e3;">+</div>
<div class="a" style="left:276.90px;top:516.20px;width:33.90px;height:13.60px;background:#5d5d5d;border-radius:4px;"></div>
<div class="t" style="left:193.85px;width:200px;text-align:center;top:519.00px;font-size:9.6px;letter-spacing:-0.08px;color:#e3e3e3;">ABC</div>
<div class="a" style="left:318.40px;top:516.20px;width:57.40px;height:13.60px;background:#5d5d5d;border-radius:4px;"></div>
<div class="t" style="left:247.10px;width:200px;text-align:center;top:519.00px;font-size:9.6px;letter-spacing:-0.08px;color:#e3e3e3;">Send</div>
<div class="a" style="left:391.70px;top:515.60px;width:13.80px;height:13.80px;background:#5a5a5a;border-radius:50%;"></div>
<div class="t" style="left:298.60px;width:200px;text-align:center;top:518.00px;font-size:10.5px;color:#e6e6e6;">?</div>
<div class="a" style="left:561.00px;top:516.00px;width:58.20px;height:13.60px;background:#5d5d5d;border-radius:4px;"></div>
<div class="t" style="left:490.10px;width:200px;text-align:center;top:519.00px;font-size:9.6px;letter-spacing:-0.08px;color:#e3e3e3;">Cancel</div>
<div class="a" style="left:627.10px;top:516.00px;width:57.70px;height:13.60px;background:#5d5d5d;border-radius:4px;"></div>
<div class="t" style="left:555.95px;width:200px;text-align:center;top:519.00px;font-size:9.6px;letter-spacing:-0.08px;color:#e3e3e3;">Apply</div>
<div class="a" style="left:693.20px;top:516.00px;width:57.90px;height:13.60px;background:linear-gradient(#3568e0,#2a5ad4);border-radius:4px;"></div>
<div class="t" style="left:622.15px;width:200px;text-align:center;top:519.00px;font-size:9.6px;letter-spacing:-0.08px;color:#ffffff;">OK</div>
</body></html>
